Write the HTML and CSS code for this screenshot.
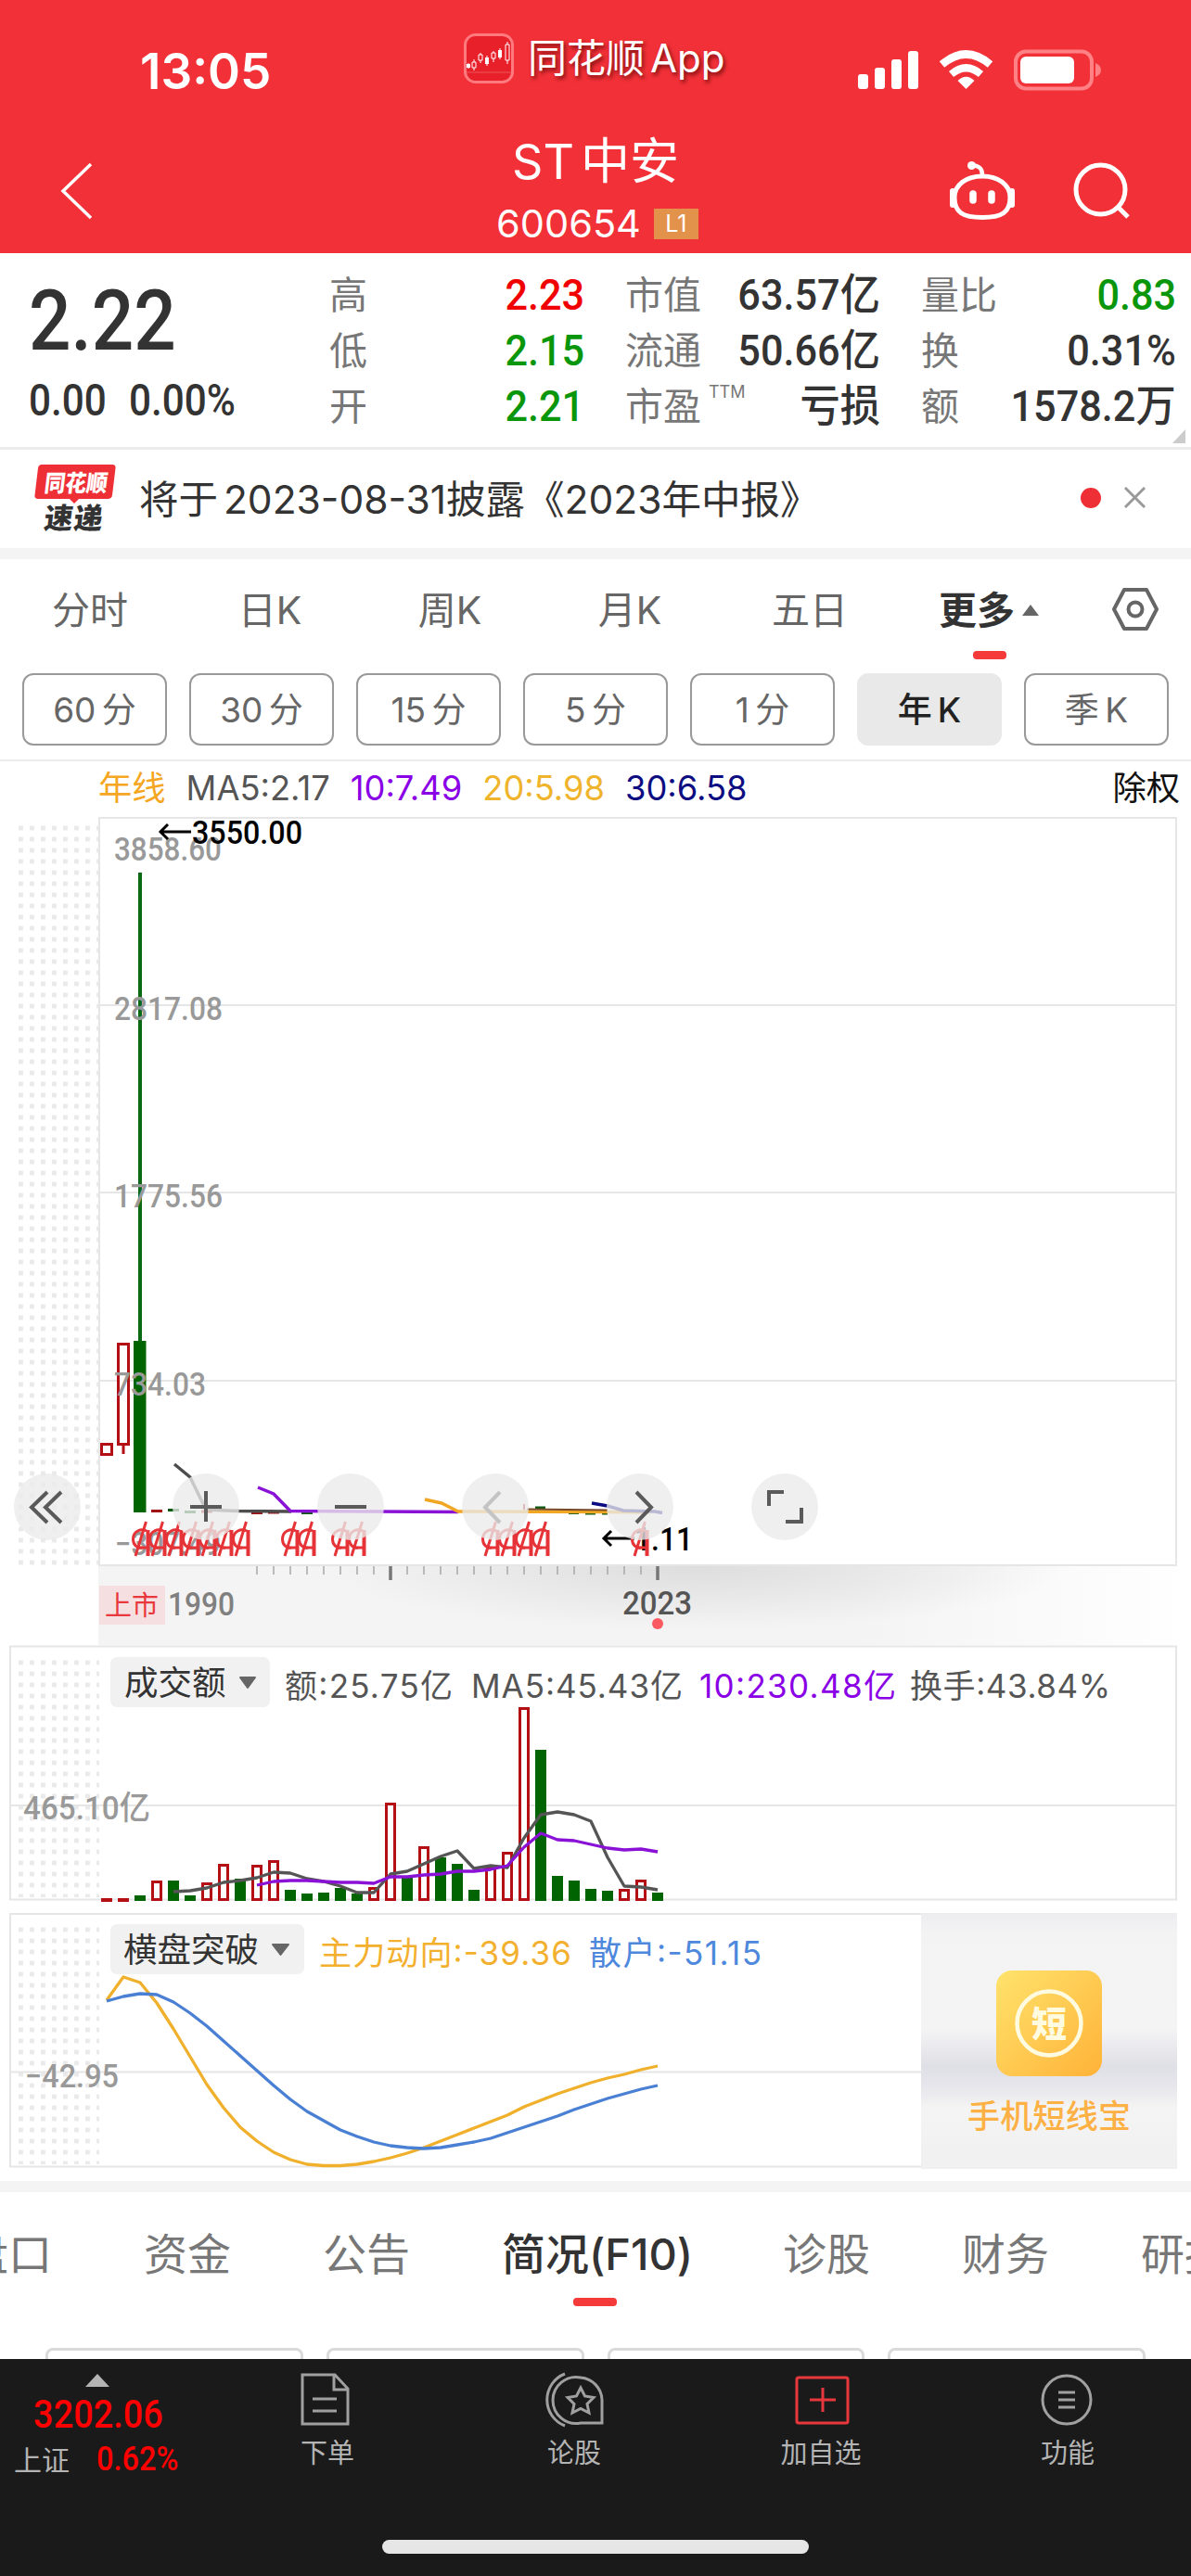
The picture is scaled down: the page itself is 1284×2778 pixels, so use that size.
FILE: index.html
```html
<!DOCTYPE html>
<html lang="zh-CN">
<head>
  <meta charset="UTF-8" />
  <meta name="viewport" content="width=device-width, initial-scale=1.0" />
  <title>ST中安 600654</title>
  <link rel="stylesheet" href="styles.css">
</head>
<body>
  <header class="header">
    <div class="status-bar">
      <span class="time">13:05</span>
      <div class="app-tag">
        <svg class="app-logo" viewBox="0 0 54 54">
          <rect x="1.5" y="1.5" width="51" height="51" rx="11" fill="#e8202a" stroke="#ff7a7e" stroke-width="3"/>
          <path d="M3 42H51" stroke="#f0555a"/>
          <path d="M5 32v6M11 28v12M18 21v11M25 24v11M32 19v12M39 16v12M47 9v24" stroke="#fff" stroke-width="1"/>
          <path d="M3 33h4v4H3zM23 26h4v7h-4zM37 18h4v8h-4z" fill="#fff"/>
          <path d="M9 31h4v6H9zM16 23h4v6h-4zM30 21h4v6h-4zM45 12h4v17h-4z" fill="#e8202a" stroke="#fff"/>
        </svg>
        <span>同花顺<em>App</em></span>
      </div>
      <svg class="status-icons" viewBox="920 45 275 60">
        <g fill="#fff">
          <rect x="925" y="80" width="11" height="16" rx="3"/>
          <rect x="943" y="73" width="11" height="23" rx="3"/>
          <rect x="961" y="64" width="11" height="32" rx="3"/>
          <rect x="979" y="55" width="11" height="41" rx="3"/>
          <path d="M1041.500 96 L1032.500 87 Q1041.500 78.500 1050.500 87 Z"/>
        </g>
        <path d="M1025.500 80 Q1041.500 66.500 1057.500 80" fill="none" stroke="#fff" stroke-width="8"/>
        <path d="M1015.500 69.500 Q1041.500 47.500 1067.500 69.500" fill="none" stroke="#fff" stroke-width="8.500"/>
        <rect x="1095" y="55.500" width="82" height="40" rx="11" fill="none" stroke="#ff8185" stroke-width="4"/>
        <rect x="1100" y="61" width="58" height="29" rx="6" fill="#fff"/>
        <path d="M1181 68q6 2.500 6 7.500t-6 7.500z" fill="#ff8185"/>
      </svg>
    </div>
    <div class="nav">
      <svg class="back" viewBox="0 0 40 64"><path d="M35 3L5 32L35 61" fill="none" stroke="#fff" stroke-width="3.500"/></svg>
      <div class="title">
        <h1>ST<span>中安</span></h1>
        <p>600654<b>L1</b></p>
      </div>
      <svg class="nav-icons" viewBox="1020 165 205 80" fill="none" stroke="#fff" stroke-width="5">
        <path d="M1059 190C1076 190 1089 199 1089 213C1089 229 1080 234.500 1059 234.500C1038 234.500 1029 229 1029 213C1029 199 1042 190 1059 190Z"/>
        <path d="M1059 189C1059 183 1057 179 1049 178.500" stroke-width="4.500"/>
        <circle cx="1047.500" cy="178.500" r="4.500" fill="#fff" stroke="none"/>
        <path d="M1027 206v15M1091 206v15" stroke-width="6" stroke-linecap="round"/>
        <path d="M1049 209v7M1069 209v7" stroke-width="7.500" stroke-linecap="round"/>
        <circle cx="1186.500" cy="204.500" r="26.500"/>
        <path d="M1205 223L1216 234"/>
      </svg>
    </div>
  </header>

  <section class="quote">
    <div class="price">
      <div class="last num">2.22</div>
      <div class="change"><span class="num">0.00</span><span class="num">0.00%</span></div>
    </div>
    <dl>
      <dt>高</dt><dd class="num up">2.23</dd>
      <dt>低</dt><dd class="num down">2.15</dd>
      <dt>开</dt><dd class="num down">2.21</dd>
    </dl>
    <dl>
      <dt>市值</dt><dd class="num">63.57亿</dd>
      <dt>流通</dt><dd class="num">50.66亿</dd>
      <dt>市盈<sup>TTM</sup></dt><dd class="num">亏损</dd>
    </dl>
    <dl>
      <dt>量比</dt><dd class="num down">0.83</dd>
      <dt>换</dt><dd class="num">0.31%</dd>
      <dt>额</dt><dd class="num">1578.2万</dd>
    </dl>
    <i class="corner"></i>
  </section>

  <section class="notice">
    <svg class="express" viewBox="35 498 92 78">
      <path d="M45 501H121Q125 501 124.500 505L121 534Q120.500 538 116 538H85L80 543L75 538H41Q37 538 37.500 534L41 505Q41.500 501 45 501Z" fill="#ee3036"/>
      <g transform="translate(67 0) skewX(-7)">
        <text x="79" y="530" class="express-top" textLength="68" lengthAdjust="spacingAndGlyphs">同花顺</text>
        <text x="81" y="570" class="express-bottom" textLength="63" lengthAdjust="spacing">速递</text>
      </g>
    </svg>
    <p>将于 2023-08-31披露《2023年中报》</p>
    <i class="dot"></i>
    <svg class="close" viewBox="0 0 24 24"><path d="M1 1L23 23M23 1L1 23" stroke="#999" stroke-width="3"/></svg>
  </section>

  <nav class="periods">
    <a>分时</a><a>日K</a><a>周K</a><a>月K</a><a>五日</a>
    <a class="more">更多<i></i></a>
    <svg viewBox="0 0 52 48" fill="none" stroke="#666" stroke-width="4"><path d="M14 3H38L49 24L38 45H14L3 24Z" stroke-linejoin="round"/><circle cx="26" cy="24" r="7.500"/></svg>
  </nav>
  <div class="chips">
    <a>60 分</a><a>30 分</a><a>15 分</a><a>5 分</a><a>1 分</a><a class="active">年 K</a><a>季 K</a>
  </div>

  <div class="legend">
    <span class="gold">年线</span><span class="gray">MA5:2.17</span><span class="purple">10:7.49</span><span class="yellow">20:5.98</span><span class="navy">30:6.58</span><span class="rights">除权</span>
  </div>

  <svg class="chart main-chart" viewBox="0 881 1284 893">
    <defs>
      <pattern id="dots" x="20" y="890.500" width="12" height="12" patternUnits="userSpaceOnUse">
        <rect width="5" height="5" rx="1" fill="#eaeaea"/>
      </pattern>
      <linearGradient id="axisBg">
        <stop offset="0" stop-color="#f4f4f4"/><stop offset=".7" stop-color="#f4f4f4"/><stop offset="1" stop-color="#fff"/>
      </linearGradient>
      <radialGradient id="axisShade" cx=".5" cy="0" r=".5" gradientTransform="translate(0 0) scale(1 1.600)">
        <stop offset="0" stop-color="#ddd"/><stop offset="1" stop-color="#ddd" stop-opacity="0"/>
      </radialGradient>
      <!-- ex-rights mark -->
      <g id="xr" fill="none" stroke="#e53338" stroke-width="3">
        <path d="M16 11C10 8 1.500 11 1.500 20C1.500 26 6 30 11 29"/>
        <path d="M15.500 1L4 38M7 29H17"/>
        <path d="M17.500 10V38" stroke-width="4"/>
      </g>
    </defs>
    <rect x="20" y="888" width="87" height="800" fill="url(#dots)"/>
    <path class="grid" d="M107 882H1268V1688H107ZM107 1084H1268M107 1286H1268M107 1489H1268"/>
    <rect x="106" y="1689" width="1178" height="85" fill="url(#axisBg)"/>
    <rect x="350" y="1689" width="800" height="85" fill="url(#axisShade)"/>

    <g fill="#fff" stroke="#b30f14" stroke-width="3">
      <rect x="109.500" y="1557.500" width="11" height="11"/>
      <path d="M133 1558V1568"/>
      <rect x="127.500" y="1449.500" width="11" height="108"/>
    </g>
    <path d="M151 941V1450" stroke="#0a6a14" stroke-width="4"/>
    <rect x="144" y="1446" width="13.500" height="185" fill="#006400"/>
    <path d="M163 1629.500H175M217 1630H229M271 1631.500H283M289 1631H301" stroke="#a01015" stroke-width="3"/>
    <path d="M181 1628.500H193M199 1630.500H211M325 1631.500H337M577 1626H588M613 1631.500H624M631 1632H642M649 1632H655" stroke="#0c5a12" stroke-width="3"/>
    <g class="line">
      <path d="M188 1579L205 1593L222 1628L258 1629.500L314 1630" stroke="#4d4d4d"/>
      <path d="M278 1604L295 1611L313 1629.500L494 1630.500" stroke="#8a12d6"/>
      <path d="M458 1617L476 1621L494 1630L655 1630.500L700 1631" stroke="#f2a724"/>
      <path d="M568 1627.500L655 1628.500" stroke="#7a4a2a" stroke-width="2"/>
      <path d="M638 1621L655 1624L672 1629L706 1630L714 1631.500" stroke="#0a0a82"/>
    </g>
    <path d="M565 1622V1628" stroke="#a01015" stroke-width="2"/>

    <g class="axis-label">
      <text x="123" y="928" textLength="116" lengthAdjust="spacingAndGlyphs">3858.60</text>
      <text x="123" y="1100" textLength="117" lengthAdjust="spacingAndGlyphs">2817.08</text>
      <text x="123" y="1302" textLength="117" lengthAdjust="spacingAndGlyphs">1775.56</text>
      <text x="123" y="1505" textLength="99" lengthAdjust="spacingAndGlyphs">734.03</text>
      <text x="124" y="1677" textLength="114" lengthAdjust="spacingAndGlyphs">−307.49</text>
    </g>
    <g class="extreme">
      <path d="M206 897H173M181 889L173 897L181 905"/>
      <text x="207" y="910" textLength="119" lengthAdjust="spacingAndGlyphs">3550.00</text>
      <path d="M684 1659H651M659 1651L651 1659L659 1667"/>
      <text x="684" y="1672" textLength="63" lengthAdjust="spacingAndGlyphs">1.11</text>
    </g>
    <g id="marks"></g>

    <g fill="#ebebeb" fill-opacity=".78">
      <circle cx="51" cy="1625" r="36"/><circle cx="222" cy="1625" r="36"/><circle cx="378" cy="1625" r="36"/>
      <circle cx="534" cy="1625" r="36"/><circle cx="690" cy="1625" r="36"/><circle cx="846" cy="1625" r="36"/>
    </g>
    <g fill="none" stroke="#5a5a5a" stroke-width="4">
      <path d="M51 1609L34 1625.500L51 1642M66 1609L49 1625.500L66 1642"/>
      <path d="M205 1625H239M222 1608V1641"/>
      <path d="M361 1625H395"/>
      <path d="M539 1609L523 1625.500L539 1642" stroke="#c4c4c4"/>
      <path d="M686 1609L702 1625.500L686 1642"/>
      <path d="M829 1624V1609H845M864 1626V1641H847"/>
    </g>

    <path id="ticks" stroke="#a8a8a8" stroke-width="1.500"/>
    <path d="M421 1689V1704M709 1689V1704" stroke="#777" stroke-width="3.500"/>
    <rect x="107" y="1710" width="71" height="42" fill="#f6dfe0"/>
    <text x="113" y="1742" class="listed">上市</text>
    <text x="181" y="1742" class="year" textLength="72" lengthAdjust="spacingAndGlyphs">1990</text>
    <text x="671" y="1741" class="year now" textLength="75" lengthAdjust="spacingAndGlyphs">2023</text>
    <circle cx="709" cy="1751" r="6" fill="#fb5a60"/>
  </svg>

  <svg class="chart volume-chart" viewBox="0 1774 1284 289">
    <rect x="20" y="1784" width="87" height="262" fill="url(#dots)"/>
    <path class="grid" d="M11 1775.500H1268V2048.500H11ZM11 1947H1268"/>
    <g id="volume"></g>
    <text x="25" y="1962" class="axis-label" textLength="137" lengthAdjust="spacingAndGlyphs">465.10亿</text>
    <rect x="119" y="1787" width="172" height="54" rx="7" fill="#f1f1f1"/>
    <text x="134" y="1828" class="pick">成交额</text>
    <path class="arrow" d="M259 1809H275L267 1820Z"/>
    <g class="info">
      <text x="307" y="1831" textLength="181" fill="#555">额:25.75亿</text>
      <text x="508" y="1831" textLength="228" fill="#555">MA5:45.43亿</text>
      <text x="754" y="1831" textLength="212" fill="#8a00e6">10:230.48亿</text>
      <text x="981" y="1831" textLength="216" fill="#555">换手:43.84%</text>
    </g>
  </svg>

  <svg class="chart trend-chart" viewBox="0 2063 1284 289">
    <defs>
      <linearGradient id="promoBg" x2="0" y2="1">
        <stop offset="0" stop-color="#ededf0"/><stop offset=".08" stop-color="#f3f3f4"/><stop offset=".45" stop-color="#f4f4f5"/>
        <stop offset=".6" stop-color="#dfdfe6"/><stop offset=".68" stop-color="#e6e6ec"/><stop offset=".76" stop-color="#f4f4f4"/><stop offset="1" stop-color="#f0f0f0"/>
      </linearGradient>
      <linearGradient id="gold" x2="1" y2="1">
        <stop offset="0" stop-color="#ffe36c"/><stop offset="1" stop-color="#ffb238"/>
      </linearGradient>
    </defs>
    <rect x="20" y="2072" width="87" height="262" fill="url(#dots)"/>
    <path class="grid" d="M11 2064H1268V2336.500H11ZM11 2234.500H1268"/>
    <g id="trend"></g>
    <text x="27" y="2251" class="axis-label" textLength="101" lengthAdjust="spacingAndGlyphs">−42.95</text>
    <rect x="119" y="2075" width="209" height="54" rx="7" fill="#f1f1f1"/>
    <text x="133" y="2116" class="pick">横盘突破</text>
    <path class="arrow" d="M294 2097H311L302.500 2108Z"/>
    <g class="info">
      <text x="344" y="2119" textLength="272" fill="#f3b02e">主力动向:-39.36</text>
      <text x="635" y="2119" textLength="186" fill="#4d88dc">散户:-51.15</text>
    </g>
    <rect x="993" y="2063" width="276" height="276" fill="url(#promoBg)"/>
    <rect x="1074" y="2125" width="114" height="114" rx="17" fill="url(#gold)"/>
    <circle cx="1131" cy="2182" r="34.500" fill="none" stroke="#fffbe0" stroke-width="4.500"/>
    <text x="1131" y="2196" class="promo-mark">短</text>
    <text x="1131" y="2295" class="promo-name" textLength="176">手机短线宝</text>
  </svg>

  <nav class="tabs">
    <a>盘口</a><a>资金</a><a>公告</a><a class="active">简况(F10)</a><a>诊股</a><a>财务</a><a>研报</a>
  </nav>
  <div class="cards"><i></i><i></i><i></i><i></i></div>

  <footer class="bottom">
    <div class="bar">
      <div class="index">
        <i></i>
        <div class="value num">3202.06</div>
        <div class="pct"><span>上证</span><b class="num">0.62%</b></div>
      </div>
      <a>
        <svg viewBox="3 0 64 60"><path d="M8 3H43L57 18V56H8ZM42 3V19H57M19 29H45M19 42H45"/></svg>下单
      </a>
      <a>
        <svg viewBox="-2 0 64 60"><path d="M20 2A30 30 0 0 0 20 58M37 6A25 25 0 1 0 37 55H60V30A25 25 0 0 0 37 6Z"/><path d="M37 17L41.500 26L51 27.500L44 34.500L46 44L37 39.500L28 44L30 34.500L23 27.500L32.500 26Z"/></svg>论股
      </a>
      <a>
        <svg viewBox="-2 0 64 60" class="add"><rect x="4" y="6" width="55" height="49" rx="2"/><path d="M18 30H46M32 17V43"/></svg>加自选
      </a>
      <a>
        <svg viewBox="1 0 64 60"><circle cx="32" cy="30" r="26"/><path d="M23 22H41M23 30H41M23 38H41"/></svg>功能
      </a>
    </div>
    <div class="home"></div>
  </footer>

  <script>
    const STEP = 18;
    const FIRST = 115;
    const NS = "http://www.w3.org/2000/svg";

    function add(parent, tag, attrs) {
      const el = document.createElementNS(NS, tag);
      for (const key in attrs) el.setAttribute(key, attrs[key]);
      document.getElementById(parent).appendChild(el);
    }

    function addLine(parent, start, base, values, color) {
      const points = values.map((v, i) => (FIRST + (start + i) * STEP) + "," + (base - v)).join(" ");
      add(parent, "polyline", { points, fill: "none", stroke: color, "stroke-width": 3.3, "stroke-linejoin": "round" });
    }

    // bar heights, positive = rise, negative = fall
    const volume = [1, 1, -6, 19, -22, -6, 17, 37, -24, 36, 41, -12, -8, -9, -14, -8, 12, 103, -26, 56,
      -47, -40, -12, 35, 50, 206, -163, -27, -22, -13, -11, 10, 20, -9];
    volume.forEach((v, i) => {
      const x = FIRST + i * STEP - 6;
      if (v === 1) {
        add("volume", "rect", { x, y: 2047, width: 12, height: 4, fill: "#b30f14" });
      } else if (v > 0) {
        add("volume", "rect", { x: x + 1.5, y: 2050 - v - 1.5, width: 9, height: v, fill: "#fff", stroke: "#b30f14", "stroke-width": 3 });
      } else {
        add("volume", "rect", { x, y: 2050 + v, width: 12, height: -v, fill: "#006400" });
      }
    });
    addLine("volume", 4, 2050, [10, 11, 14, 20, 22, 25, 31, 30, 24, 21, 16, 9, 9, 29, 32, 40, 48, 54, 35, 38, 36,
      68, 93, 96, 93, 86, 47, 16, 15, 12], "#555");
    addLine("volume", 9, 2050, [17, 21, 22, 22, 21, 20, 20, 19, 26, 26, 28, 29, 32, 32, 34, 38, 58, 73, 66, 65,
      61, 57, 55, 56, 53], "#8a12d6");

    addLine("trend", 0, 2336, [179, 204, 198, 176, 148, 118, 88, 63, 42, 27, 15, 7, 2, 0.5, 0.5, 2, 5, 9, 14, 20,
      27, 34, 41, 48, 55, 64, 71, 78, 84, 90, 95, 99, 104, 108], "#f0b02c");
    addLine("trend", 0, 2336, [178, 183, 186, 185, 177, 165, 151, 135, 119, 103, 87, 72, 59, 49, 39, 32, 26, 22, 20, 19,
      20, 23, 26, 30, 36, 42, 48, 54, 61, 67, 73, 78, 83, 87], "#4a80d4");

    [142, 160, 178, 196, 214, 232, 250, 303, 321, 357, 375, 519, 537, 555, 573, 680].forEach(x => {
      add("marks", "use", { href: "#xr", x, y: 1640 });
    });

    let ticks = "";
    for (let x = 277; x < 705; x += STEP) ticks += "M" + x + " 1689V1698";
    document.getElementById("ticks").setAttribute("d", ticks);
  </script>
</body>
</html>
```
FILE: styles.css
```css
* {
  box-sizing: border-box;
  margin: 0;
  padding: 0;
}

body {
  width: 1284px;
  height: 2778px;
  overflow: hidden;
  display: flex;
  flex-direction: column;
  background-color: #fff;
  color: #333;
  font-family: Inter, "Noto Sans CJK SC", sans-serif;
}

i {
  display: block;
}

.num {
  font-family: Roboto, "Noto Sans CJK SC", sans-serif;
  font-weight: 500;
  transform: scaleX(0.88);
  transform-origin: left center;
}

.up {
  color: #f00000;
}

.down {
  color: #0a960a;
}

/* header */
.header {
  height: 273px;
  background-color: #f23037;
  color: #fff;
}

.status-bar {
  height: 140px;
  display: flex;
  align-items: flex-start;
}

.time {
  width: 349px;
  margin-left: 151px;
  padding-top: 46px;
  font-size: 53px;
  font-weight: 600;
  line-height: 63px;
}

.app-tag {
  width: 420px;
  padding-top: 36px;
  display: flex;
  align-items: center;
  gap: 15px;
  font-size: 42px;
  line-height: 54px;
  text-shadow: 2px 3px 4px rgba(70, 0, 0, 0.7);
}

.app-tag em {
  margin-left: 6px;
  font-style: normal;
}

.app-logo {
  width: 54px;
  height: 54px;
}

.status-icons {
  width: 275px;
  height: 60px;
  margin-top: 45px;
}

.nav {
  height: 133px;
  padding: 0 59px 0 63px;
  display: grid;
  grid-template-columns: 1fr auto 1fr;
}

.back {
  width: 40px;
  height: 64px;
  margin-top: 34px;
}

.title {
  text-align: center;
}

.title h1 {
  height: 68px;
  margin-left: -4px;
  font-size: 52px;
  font-weight: 400;
  line-height: 69px;
}

.title h1 span {
  margin-left: 7px;
  font-size: 53px;
}

.title p {
  display: flex;
  align-items: center;
  gap: 14px;
  height: 66px;
  font-size: 41.5px;
}

.title b {
  width: 48px;
  height: 33px;
  background-color: #e3924c;
  font-size: 25px;
  font-weight: 400;
  line-height: 33px;
}

.nav-icons {
  width: 205px;
  height: 80px;
  margin-top: 25px;
  justify-self: end;
}

/* quote */
.quote {
  position: relative;
  height: 212px;
  padding: 15px 16px 0 31px;
  border-bottom: 3px solid #ececec;
  display: flex;
}

.price {
  width: 326px;
}

.last {
  height: 107px;
  padding-top: 2px;
  font-size: 91px;
  line-height: 112px;
}

.change {
  display: flex;
  gap: 13px;
  height: 72px;
  align-items: center;
  font-size: 48px;
}

.quote dl {
  width: 275px;
  display: grid;
  grid-template-columns: 82px 193px;
  grid-auto-rows: 60px;
  align-items: center;
}

.quote dl + dl {
  margin-left: 44px;
}

.quote dt {
  color: #777;
  font-size: 41px;
  line-height: 60px;
  white-space: nowrap;
}

.quote dd {
  font-size: 47px;
  line-height: 56px;
  white-space: nowrap;
  transform: scaleX(0.92);
  transform-origin: right center;
  justify-self: end;
}

.quote sup {
  margin-left: 8px;
  font-size: 18px;
  line-height: 0;
  vertical-align: 24px;
}

.corner {
  position: absolute;
  right: 6px;
  bottom: 4px;
  border-bottom: 15px solid #ccc;
  border-left: 14px solid transparent;
}

/* notice */
.notice {
  height: 118px;
  border-bottom: 12px solid #f4f4f4;
  padding: 0 49px 3px 35px;
  display: flex;
  align-items: center;
}

.express {
  width: 92px;
  height: 78px;
}

.express text {
  font-weight: 900;
  text-anchor: middle;
}

.express-top {
  fill: #fff;
  font-size: 25px;
}

.express-bottom {
  fill: #333;
  font-size: 31px;
}

.notice p {
  flex: 1;
  margin-left: 23px;
  padding-bottom: 2px;
  font-size: 42.5px;
  white-space: pre;
  word-spacing: -6px;
}

.dot {
  width: 22px;
  height: 22px;
  border-radius: 50%;
  background-color: #ee3036;
}

.close {
  width: 23px;
  height: 23px;
  margin-left: 25px;
}

/* periods */
.periods {
  height: 123px;
  display: flex;
  color: #666;
  font-size: 41px;
  line-height: 110px;
}

.periods a {
  width: 194px;
  text-align: center;
}

.periods .more {
  position: relative;
  width: 228px;
  padding-left: 42px;
  display: flex;
  align-items: center;
  gap: 8px;
  height: 110px;
  color: #333;
  font-weight: 700;
}

.more i {
  border: 9px solid transparent;
  border-top: 0;
  border-bottom: 12px solid #666;
}

.more::after {
  content: "";
  position: absolute;
  left: 79px;
  top: 99px;
  width: 36px;
  height: 9px;
  border-radius: 4px;
  background-color: #f53a3a;
}

.periods svg {
  width: 52px;
  height: 48px;
  margin-top: 30px;
}

.chips {
  height: 95px;
  padding: 0 24px;
  border-bottom: 2px solid #ececec;
  display: grid;
  grid-template-columns: repeat(7, 156px);
  gap: 24px;
}

.chips a {
  height: 78px;
  border: 2px solid #999;
  border-radius: 12px;
  color: #666;
  font-size: 37px;
  line-height: 76px;
  text-align: center;
  word-spacing: -4px;
}

.chips .active {
  border-color: #e9e9e9;
  background-color: #e9e9e9;
  color: #222;
  font-weight: 500;
}

.legend {
  height: 60px;
  padding: 0 12px 0 106px;
  display: flex;
  gap: 22px;
  font-size: 36.3px;
  line-height: 58px;
}

.gold {
  color: #f5a623;
}

.gray {
  color: #555;
}

.purple {
  color: #8a00e6;
}

.yellow {
  color: #efb42c;
}

.navy {
  color: #0d0d82;
}

.rights {
  margin-left: auto;
  color: #111;
}

/* charts */
.chart {
  display: block;
  width: 1284px;
  flex: none;
}

.main-chart {
  height: 893px;
}

.volume-chart,
.trend-chart {
  height: 289px;
}

.grid {
  fill: none;
  stroke: #e6e6e6;
  stroke-width: 2;
}

.line {
  fill: none;
  stroke-width: 3.5;
}

.axis-label {
  fill: #999;
  font-family: Roboto, "Noto Sans CJK SC", sans-serif;
  font-size: 35px;
  font-weight: 500;
}

.extreme {
  fill: #000;
  font-family: Roboto, sans-serif;
  font-size: 35px;
  font-weight: 500;
}

.extreme path {
  fill: none;
  stroke: #000;
  stroke-width: 3;
}

.listed {
  fill: #e8383d;
  font-size: 29px;
}

.year {
  fill: #808080;
  font-family: Roboto, sans-serif;
  font-size: 35px;
  font-weight: 500;
}

.now {
  fill: #555;
}

.pick {
  fill: #333;
  font-size: 36.5px;
}

.arrow {
  fill: #666;
  stroke: #666;
  stroke-width: 2;
  stroke-linejoin: round;
}

.info {
  font-size: 35px;
}

.promo-mark {
  fill: #fffbe0;
  font-size: 38px;
  font-weight: 900;
  text-anchor: middle;
}

.promo-name {
  fill: #fdb043;
  font-size: 35px;
  font-weight: 500;
  text-anchor: middle;
}

/* tabs */
.tabs {
  height: 180px;
  border-top: 12px solid #f4f4f4;
  display: flex;
  flex: none;
  gap: 99px;
  color: #777;
  font-size: 47px;
  line-height: 134px;
  white-space: nowrap;
}

.tabs a:first-child {
  margin-left: -38px;
}

.tabs .active {
  position: relative;
  width: 204px;
  color: #333;
  font-weight: 500;
}

.tabs .active::after {
  content: "";
  position: absolute;
  left: 77px;
  top: 114px;
  width: 47px;
  height: 9px;
  border-radius: 4px;
  background-color: #f53a3a;
}

.cards {
  height: 12px;
  flex: none;
  overflow: hidden;
  padding: 0 49px;
  display: flex;
  gap: 25px;
}

.cards i {
  flex: 1;
  height: 60px;
  border: 3px solid #dadada;
  border-radius: 8px;
}

/* bottom */
.bottom {
  height: 234px;
  flex: none;
  background-color: #1a1a1a;
  color: #b4b4b4;
}

.bar {
  height: 195px;
  display: flex;
}

.index {
  width: 220px;
  padding: 16px 0 0 15px;
}

.index i {
  width: 0;
  margin-left: 77px;
  border: 13px solid transparent;
  border-top: 0;
  border-bottom: 14px solid #b4b4b4;
}

.value {
  padding-left: 24px;
  color: #f00;
  font-size: 43px;
  line-height: 58px;
}

.pct {
  display: flex;
  align-items: center;
  gap: 29px;
  height: 38px;
  font-size: 30px;
}

.pct b {
  color: #f00;
  font-size: 37px;
}

.bar a {
  width: 266px;
  padding-top: 14px;
  display: flex;
  flex-direction: column;
  align-items: center;
  font-size: 29px;
  line-height: 56px;
}

.bar svg {
  width: 64px;
  height: 60px;
  fill: none;
  stroke: #a0a0a0;
  stroke-width: 3;
}

.bar .add {
  stroke: #e8383d;
}

.home {
  width: 460px;
  height: 15px;
  margin: 0 auto;
  border-radius: 8px;
  background-color: #e6e6e6;
}
```
